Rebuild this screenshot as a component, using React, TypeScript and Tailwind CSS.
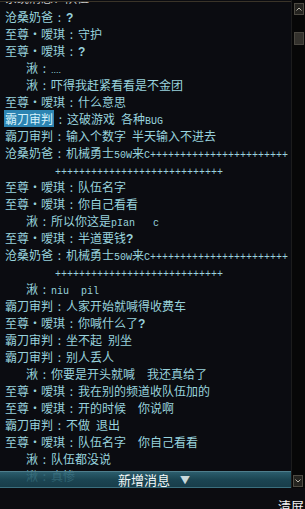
import React from "react";

function T({ s }: { s: string }) {
  const parts: React.ReactNode[] = [];
  const re = /(\?)|(…)|([\x20-\x3e\x40-\x7e]+)|([^\x20-\x7e…]+)/g;
  let m: RegExpExecArray | null;
  let i = 0;
  while ((m = re.exec(s)) !== null) {
    if (m[1]) {
      parts.push(
        <span key={i++} className="font-bold text-[12px] font-['Liberation_Sans']">
          ?
        </span>
      );
    } else if (m[2]) {
      parts.push(
        <span key={i++} className="font-['Liberation_Sans'] text-[9px]">
          ....
        </span>
      );
    } else if (m[3]) {
      parts.push(
        <span key={i++} className="font-['Liberation_Mono'] text-[10px]">
          {m[3]}
        </span>
      );
    } else {
      parts.push(<span key={i++}>{m[4]}</span>);
    }
  }
  return <>{parts}</>;
}

type Line = { n?: string; m?: string; indent?: boolean; hl?: boolean; cont?: string };

const lines: Line[] = [
  { n: "沧桑奶爸", m: "?" },
  { n: "至尊·嗳琪", m: "守护" },
  { n: "至尊·嗳琪", m: "?" },
  { n: "湫", m: "…", indent: true },
  { n: "湫", m: "吓得我赶紧看看是不金团", indent: true },
  { n: "至尊·嗳琪", m: "什么意思" },
  { n: "霸刀审判", m: "这破游戏 各种BUG", hl: true },
  { n: "霸刀审判", m: "输入个数字 半天输入不进去" },
  { n: "沧桑奶爸", m: "机械勇士50W来C+++++++++++++++++++++++" },
  { cont: "++++++++++++++++++++++++++++" },
  { n: "至尊·嗳琪", m: "队伍名字" },
  { n: "至尊·嗳琪", m: "你自己看看" },
  { n: "湫", m: "所以你这是pIan   c", indent: true },
  { n: "至尊·嗳琪", m: "半道要钱?" },
  { n: "沧桑奶爸", m: "机械勇士50W来C+++++++++++++++++++++++" },
  { cont: "++++++++++++++++++++++++++++" },
  { n: "湫", m: "niu  pil", indent: true },
  { n: "霸刀审判", m: "人家开始就喊得收费车" },
  { n: "至尊·嗳琪", m: "你喊什么了?" },
  { n: "霸刀审判", m: "坐不起 别坐" },
  { n: "霸刀审判", m: "别人丢人" },
  { n: "湫", m: "你要是开头就喊  我还真给了", indent: true },
  { n: "至尊·嗳琪", m: "我在别的频道收队伍加的" },
  { n: "至尊·嗳琪", m: "开的时候  你说啊" },
  { n: "霸刀审判", m: "不做 退出" },
  { n: "至尊·嗳琪", m: "队伍名字  你自己看看" },
  { n: "湫", m: "队伍都没说", indent: true },
  { n: "湫", m: "真惨", indent: true },
];

function ChatLine({ l }: { l: Line }) {
  if (l.cont) {
    return (
      <div className="h-[17px] leading-[17px] whitespace-pre pl-[55px]">
        <T s={l.cont} />
      </div>
    );
  }
  return (
    <div
      className={
        "h-[17px] leading-[17px] whitespace-pre " + (l.indent ? "pl-[25px]" : "pl-[4px]")
      }
    >
      {l.hl ? (
        <span className="inline-block h-[17px] bg-[#2c84b2] text-[#d6f2fb] px-[1px]">{l.n}</span>
      ) : (
        <span className="pl-[1px]">{l.n}</span>
      )}
      <span className="inline-block w-[13px] text-center">:</span>
      <T s={l.m || ""} />
    </div>
  );
}

export default function App() {
  return (
    <div className="w-[305px] h-[509px] bg-[#0b0c11] overflow-hidden flex flex-col font-['Noto_Sans_CJK_SC',sans-serif] text-[12px] text-[#98d3dd]">
      <div className="flex h-[488px]">
        <div className="relative w-[291px] mt-[1px] border-t border-[#3a3429] overflow-hidden">
          <div className="-mt-[11px]">
            <div className="h-[17px] leading-[13px] pl-[5px] text-[#c9c9c9] overflow-hidden">系统消息：队伍</div>
            {lines.map((l, i) => (
              <ChatLine key={i} l={l} />
            ))}
          </div>
          <div className="absolute left-0 right-0 bottom-0 h-[17px] border-t border-[#5d8e9c]/80 border-b border-b-[#3b6f7e] bg-linear-to-b from-[#2f6676]/90 via-[#1e4f5e]/85 to-[#1a4654]/85 flex items-center">
            <span className="pl-[118px] text-[13px] leading-[15px] text-[#f4f8f8]">新增消息</span>
            <span className="pl-[10px] text-[10px] leading-[15px] text-[#c9d9dc]">▼</span>
          </div>
        </div>
        <div className="w-[14px] bg-[#070707] border-l border-[#1c1c1c] flex flex-col">
          <div className="mt-[3px] ml-[2px] w-[10px] h-[12px] bg-[#24231f] border border-[#4d4a42] flex items-center justify-center">
            <svg width="6" height="4" viewBox="0 0 6 4">
              <path d="M0.5 3.5 L3 1 L5.5 3.5" stroke="#b8b4a8" strokeWidth="1" fill="none" />
            </svg>
          </div>
          <div className="mt-[17px] ml-[2px] w-[10px] h-[13px] bg-[#33312c] border border-[#4a4740]" />
          <div className="flex-1" />
          <div className="mb-[1px] ml-[1px] w-[10px] h-[12px] bg-[#24231f] border border-[#4d4a42] flex items-center justify-center">
            <svg width="6" height="4" viewBox="0 0 6 4">
              <path d="M0.5 0.5 L3 3 L5.5 0.5" stroke="#b8b4a8" strokeWidth="1" fill="none" />
            </svg>
          </div>
        </div>
      </div>
      <div className="h-[21px] flex justify-end pt-[11px] pr-[1px] bg-[#0c0c10]">
        <span className="text-[13px] leading-[13px] text-[#f4f4f4]">清屏</span>
      </div>
    </div>
  );
}
